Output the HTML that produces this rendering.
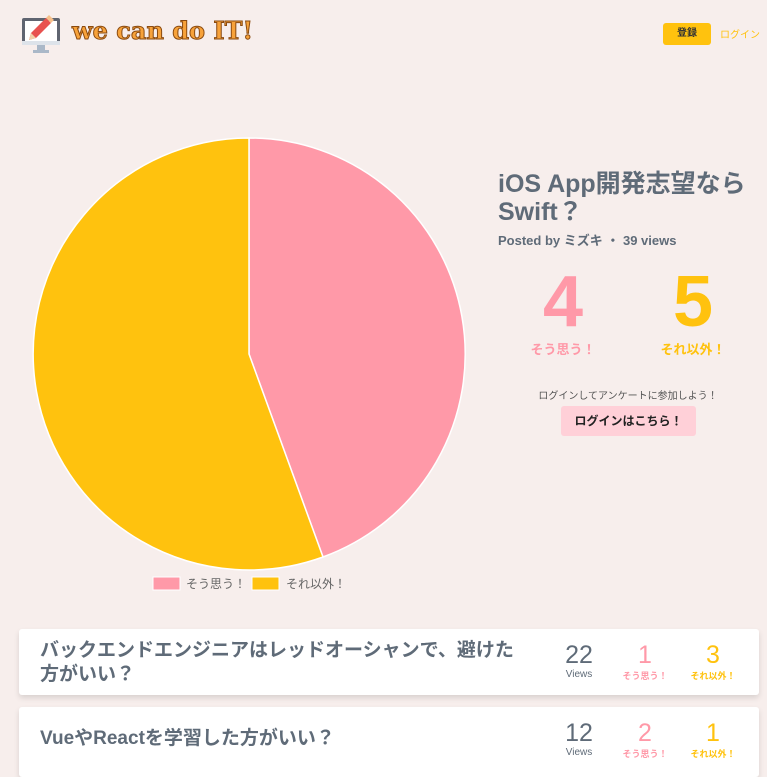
<!DOCTYPE html>
<html><head><meta charset="utf-8"><style>
*{margin:0;padding:0;box-sizing:border-box}
body{width:767px;height:767px;overflow:hidden;background:#f7eeec;font-family:"Liberation Sans","Noto Sans CJK JP",sans-serif;position:relative;color:#5f6b78}
.abs{position:absolute}
.logo{left:72px;top:16px;font-family:"DejaVu Serif","Liberation Serif",serif;font-weight:bold;font-size:24px;color:#f7a23a;-webkit-text-stroke:1px #8a4a10;letter-spacing:0px}
.btn{left:663px;top:23px;width:48px;height:22px;background:#ffc20e;border-radius:3px;font-size:10px;font-weight:bold;color:#333;text-align:center;line-height:22px}
.login{left:720px;top:26px;font-size:10px;color:#ffc20e}
.card{left:19px;width:740px;background:#fff;border-radius:3px;box-shadow:0 3px 6px rgba(0,0,0,.12)}
.ct{position:absolute;left:21px;font-size:19px;font-weight:bold;color:#5f6b78;line-height:24px}
.n{position:absolute;text-align:center;width:60px}
.n b{display:block;font-size:25px;font-weight:normal;line-height:28px}
.n i{display:block;font-style:normal;font-size:9px;font-weight:bold}
</style></head><body>
<svg class="abs" style="left:20px;top:14px" width="44" height="40" viewBox="0 0 44 40">
<rect x="2" y="4" width="38" height="26" rx="2" fill="#5f6470"/>
<rect x="5" y="7" width="32" height="20" fill="#fff"/>
<rect x="2" y="27" width="38" height="4" fill="#dde3ea"/>
<rect x="17" y="31" width="8" height="5" fill="#aab8c8"/>
<rect x="13" y="36" width="16" height="3" fill="#aab8c8"/>
<path d="M9 26 L11 19 L26 4 L31 9 L16 24 Z" fill="#e8524f"/>
<path d="M26 4 L29 1 L34 6 L31 9 Z" fill="#f6c08a"/>
<path d="M9 26 L11 19 L16 24 Z" fill="#f1d1a8"/>
</svg>
<div class="abs logo">we can do IT!</div>
<div class="abs btn">登録</div>
<div class="abs login">ログイン</div>

<svg class="abs" style="left:0;top:0" width="480" height="600">
<path d="M249 354 L249 138 A216 216 0 0 1 323 557 Z" fill="#ff99a8" stroke="#fff" stroke-width="1.5"/>
<path d="M249 354 L323 557 A216 216 0 1 1 249 138 Z" fill="#ffc20e" stroke="#fff" stroke-width="1.5"/>
<rect x="153" y="577" width="27" height="13" fill="#ff99a8" stroke="#fff"/>
<text x="186" y="588" font-size="12" fill="#666" font-family="Liberation Sans,Noto Sans CJK JP,sans-serif">そう思う！</text>
<rect x="252" y="577" width="27" height="13" fill="#ffc20e" stroke="#fff"/>
<text x="286" y="588" font-size="12" fill="#666" font-family="Liberation Sans,Noto Sans CJK JP,sans-serif">それ以外！</text>
</svg>

<div class="abs" style="left:498px;top:170px;font-size:25px;font-weight:bold;line-height:28px;color:#5f6b78">iOS App開発志望なら<br>Swift？</div>
<div class="abs" style="left:498px;top:230px;font-size:13px;font-weight:bold;color:#5f6b78">Posted by ミズキ ・ 39 views</div>
<div class="abs" style="left:513px;top:262px;width:100px;text-align:center;font-size:72px;font-weight:bold;line-height:80px;color:#ff99a8">4</div>
<div class="abs" style="left:643px;top:262px;width:100px;text-align:center;font-size:72px;font-weight:bold;line-height:80px;color:#ffc20e">5</div>
<div class="abs" style="left:513px;top:339px;width:100px;text-align:center;font-size:13px;font-weight:bold;color:#ff99a8">そう思う！</div>
<div class="abs" style="left:643px;top:339px;width:100px;text-align:center;font-size:13px;font-weight:bold;color:#ffc20e">それ以外！</div>
<div class="abs" style="left:528px;top:387px;width:200px;text-align:center;font-size:10px;color:#555">ログインしてアンケートに参加しよう！</div>
<div class="abs" style="left:561px;top:406px;width:135px;height:30px;background:#ffd0d8;border-radius:3px;text-align:center;line-height:30px;font-size:12px;font-weight:bold;color:#222">ログインはこちら！</div>

<div class="abs card" style="top:629px;height:66px">
<div class="ct" style="top:10px">バックエンドエンジニアはレッドオーシャンで、避けた<br>方がいい？</div>
<div class="n" style="left:530px;top:12px;color:#5f6b78"><b>22</b><i style="font-weight:normal;font-size:10px">Views</i></div>
<div class="n" style="left:596px;top:12px;color:#ff99a8"><b>1</b><i>そう思う！</i></div>
<div class="n" style="left:664px;top:12px;color:#ffc20e"><b>3</b><i>それ以外！</i></div>
</div>
<div class="abs card" style="top:707px;height:70px">
<div class="ct" style="top:20px">VueやReactを学習した方がいい？</div>
<div class="n" style="left:530px;top:12px;color:#5f6b78"><b>12</b><i style="font-weight:normal;font-size:10px">Views</i></div>
<div class="n" style="left:596px;top:12px;color:#ff99a8"><b>2</b><i>そう思う！</i></div>
<div class="n" style="left:664px;top:12px;color:#ffc20e"><b>1</b><i>それ以外！</i></div>
</div>
</body></html>
